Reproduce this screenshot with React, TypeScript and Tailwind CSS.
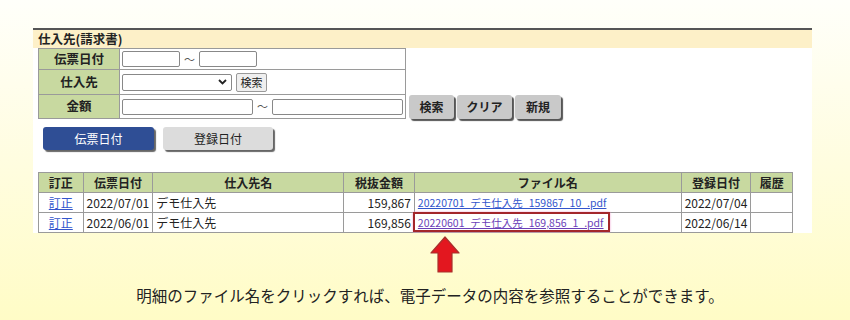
import React from 'react';

const jp = { fontFamily: '"Noto Sans CJK JP", "Noto Sans", sans-serif' };

interface Row {
  date: string;
  vendor: string;
  amount: string;
  file: string;
  registered: string;
  highlight?: boolean;
}

const rows: Row[] = [
  { date: '2022/07/01', vendor: 'デモ仕入先', amount: '159,867', file: '20220701_デモ仕入先_159867_10_.pdf', registered: '2022/07/04' },
  { date: '2022/06/01', vendor: 'デモ仕入先', amount: '169,856', file: '20220601_デモ仕入先_169,856_1_.pdf', registered: '2022/06/14', highlight: true },
];

function GrayButton({ label, className }: { label: string; className: string }) {
  return (
    <div
      className={`flex items-center justify-center rounded-[3px] bg-[#c9c9c9] text-[12px] font-bold text-[#222] shadow-[2px_2px_1px_#555] ${className}`}
    >
      {label}
    </div>
  );
}

export default function App() {
  return (
    <div
      className="w-[850px] h-[320px] overflow-hidden bg-gradient-to-b from-[#fffffa] via-[#fffde0] to-[#fffcc6] text-[#222]"
      style={jp}
    >
      <div className="pt-[28px]">
        <div className="ml-[33px] w-[779px] h-[205px] overflow-hidden bg-white">
          {/* title bar */}
          <div className="h-[20px] border-t-2 border-[#555] bg-[#fdf0c8] pl-[5px] text-[12.5px] font-bold leading-[17px]">
            仕入先(請求書)
          </div>

          {/* search form */}
          <div className="flex pl-[5px]">
            <table className="w-[368px] border-collapse text-[12px]">
              <tbody>
                <tr className="h-[21px]">
                  <td className="w-[82px] border border-[#9a9a9a] bg-[#c8d9a0] text-center text-[12.5px] font-bold">伝票日付</td>
                  <td className="border border-[#9a9a9a] px-[2px]">
                    <div className="flex items-center">
                      <div className="h-[16px] w-[58px] rounded-[2px] border border-[#888]" />
                      <span className="mx-[4px] text-[11px] text-[#555]">～</span>
                      <div className="h-[16px] w-[58px] rounded-[2px] border border-[#888]" />
                    </div>
                  </td>
                </tr>
                <tr className="h-[25px]">
                  <td className="border border-[#9a9a9a] bg-[#c8d9a0] text-center text-[12.5px] font-bold">仕入先</td>
                  <td className="border border-[#9a9a9a] px-[2px]">
                    <div className="flex items-center">
                      <div className="flex h-[17px] w-[110px] items-center justify-end rounded-[2px] border border-[#888] pr-[4px]">
                        <svg width="9" height="6" viewBox="0 0 9 6">
                          <path d="M1 1 L4.5 4.5 L8 1" stroke="#222" strokeWidth="1.8" fill="none" />
                        </svg>
                      </div>
                      <div className="ml-[4px] flex h-[19px] w-[31px] items-center justify-center rounded-[2px] border border-[#999] bg-[#efefef] text-[11px]">
                        検索
                      </div>
                    </div>
                  </td>
                </tr>
                <tr className="h-[24px]">
                  <td className="border border-[#9a9a9a] bg-[#c8d9a0] text-center text-[12.5px] font-bold">金額</td>
                  <td className="border border-[#9a9a9a] px-[2px]">
                    <div className="flex items-center">
                      <div className="h-[16px] w-[131px] rounded-[2px] border border-[#888]" />
                      <span className="mx-[4px] text-[11px] text-[#555]">～</span>
                      <div className="h-[16px] w-[131px] rounded-[2px] border border-[#888]" />
                    </div>
                  </td>
                </tr>
              </tbody>
            </table>
            <div className="ml-[3px] mt-[47px] flex gap-[3px]">
              <GrayButton label="検索" className="h-[24px] w-[45px]" />
              <GrayButton label="クリア" className="h-[24px] w-[55px]" />
              <GrayButton label="新規" className="h-[24px] w-[46px]" />
            </div>
          </div>

          {/* tabs */}
          <div className="ml-[10px] mt-[8px] flex gap-[9px]">
            <div className="flex h-[23px] w-[111px] items-center justify-center rounded-[3px] bg-[#2f4e95] text-[12px] text-white shadow-[2px_2px_1px_#666]">
              伝票日付
            </div>
            <div className="flex h-[23px] w-[110px] items-center justify-center rounded-[3px] bg-[#dcdcdc] text-[12px] text-[#222] shadow-[2px_2px_1px_#666]">
              登録日付
            </div>
          </div>

          {/* results */}
          <table className="ml-[5px] mt-[22px] w-[755px] border-collapse text-[12px]">
            <thead>
              <tr className="h-[20px] bg-[#c8d9a0] font-bold">
                <th className="w-[45px] border border-[#9a9a9a]">訂正</th>
                <th className="w-[67px] border border-[#9a9a9a]">伝票日付</th>
                <th className="w-[193px] border border-[#9a9a9a]">仕入先名</th>
                <th className="w-[71px] border border-[#9a9a9a]">税抜金額</th>
                <th className="w-[269px] border border-[#9a9a9a]">ファイル名</th>
                <th className="w-[68px] border border-[#9a9a9a]">登録日付</th>
                <th className="w-[42px] border border-[#9a9a9a]">履歴</th>
              </tr>
            </thead>
            <tbody>
              {rows.map((r) => (
                <tr key={r.date} className="h-[20px]">
                  <td className="border border-[#9a9a9a] text-center">
                    <span className="text-[#3355cc] underline">訂正</span>
                  </td>
                  <td className="border border-[#9a9a9a] px-[3px]">{r.date}</td>
                  <td className="border border-[#9a9a9a] px-[3px]">{r.vendor}</td>
                  <td className="border border-[#9a9a9a] px-[3px] text-right">{r.amount}</td>
                  <td className="relative border border-[#9a9a9a] px-[3px] text-[10.5px]">
                    <span className={r.highlight ? 'text-[#6a3fb8] underline' : 'text-[#3355cc] underline'}>{r.file}</span>
                    {r.highlight && (
                      <div className="absolute left-[-2px] top-[-1px] h-[20px] w-[197px] border-2 border-[#a3262b] shadow-[0_0_2px_#f0a0d0]" />
                    )}
                  </td>
                  <td className="border border-[#9a9a9a] px-[3px]">{r.registered}</td>
                  <td className="border border-[#9a9a9a]" />
                </tr>
              ))}
              <tr className="h-[20px]">
                <td className="border border-[#9a9a9a]" />
                <td className="border border-[#9a9a9a]" />
                <td className="border border-[#9a9a9a]" />
                <td className="border border-[#9a9a9a]" />
                <td className="border border-[#9a9a9a]" />
                <td className="border border-[#9a9a9a]" />
                <td className="border border-[#9a9a9a]" />
              </tr>
            </tbody>
          </table>
        </div>
      </div>

      {/* arrow + caption */}
      <div className="flex flex-col items-center">
        <svg className="ml-[40px] mt-[3px]" width="30" height="37" viewBox="0 0 30 37">
          <path
            d="M15 1 L29 17 L22 17 L22 36 L8 36 L8 17 L1 17 Z"
            fill="#e3171f"
            stroke="#a8302c"
            strokeWidth="1.2"
            strokeLinejoin="round"
          />
        </svg>
        <div className="ml-[10px] mt-[11px] text-[15.5px] text-[#222]">
          明細のファイル名をクリックすれば、電子データの内容を参照することができます。
        </div>
      </div>
    </div>
  );
}
